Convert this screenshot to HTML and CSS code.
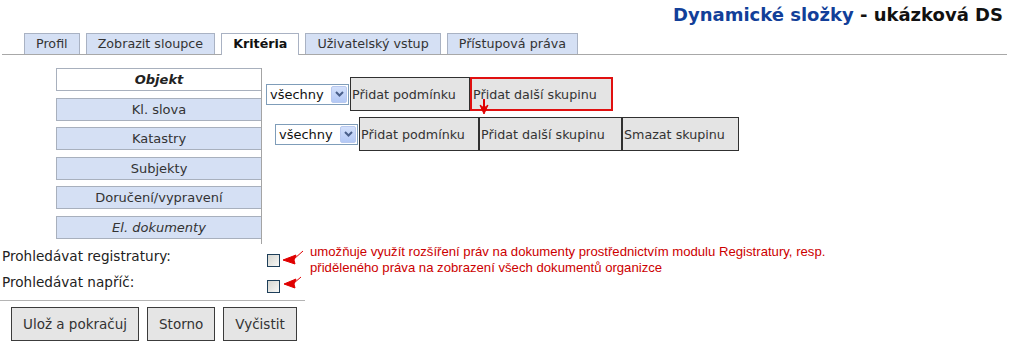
FILE: index.html
```html
<!DOCTYPE html>
<html lang="cs">
<head>
<meta charset="utf-8">
<title>Dynamické složky</title>
<link rel="stylesheet" href="styles.css">
</head>
<body>
<div class="page">
  <div class="title"><span class="brand">Dynamické složky</span> - ukázková DS</div>
  <nav class="tabs">
    <span class="tab">Profil</span>
    <span class="tab">Zobrazit sloupce</span>
    <span class="tab active">Kritéria</span>
    <span class="tab">Uživatelský vstup</span>
    <span class="tab">Přístupová práva</span>
  </nav>
  <div class="form">
    <div class="side">
      <div class="side-item active">Objekt</div>
      <div class="side-item">Kl. slova</div>
      <div class="side-item">Katastry</div>
      <div class="side-item">Subjekty</div>
      <div class="side-item">Doručení/vypravení</div>
      <div class="side-item italic">El. dokumenty</div>
    </div>
    <div class="builder">
      <div class="group">
        <div class="select">všechny<span class="sel-btn"><svg width="9" height="6" viewBox="0 0 9 6"><path d="M1 1 L4.5 4.5 L8 1" fill="none" stroke="#4a5f8a" stroke-width="2"/></svg></span></div>
        <button class="btn w-a">Přidat podmínku</button>
        <button class="btn w-b hl">Přidat další skupinu</button>
      </div>
      <div class="group sub">
        <div class="select">všechny<span class="sel-btn"><svg width="9" height="6" viewBox="0 0 9 6"><path d="M1 1 L4.5 4.5 L8 1" fill="none" stroke="#4a5f8a" stroke-width="2"/></svg></span></div>
        <button class="btn w-a">Přidat podmínku</button>
        <button class="btn w-b">Přidat další skupinu</button>
        <button class="btn w-c">Smazat skupinu</button>
      </div>
    </div>
    <label class="lbl" for="cb1">Prohledávat registratury:</label>
    <div class="cb-cell"><input class="cb" type="checkbox" id="cb1"></div>
    <label class="lbl" for="cb2">Prohledávat napříč:</label>
    <div class="cb-cell"><input class="cb" type="checkbox" id="cb2"></div>
  </div>
  <div class="rule"></div>
  <div class="actions">
    <button class="abtn">Ulož a pokračuj</button>
    <button class="abtn">Storno</button>
    <button class="abtn">Vyčistit</button>
  </div>
  <div class="note">umožňuje využít rozšíření práv na dokumenty prostřednictvím modulu Registratury, resp.<br>přiděleného práva na zobrazení všech dokumentů organizce</div>
  <svg class="marks" width="1009" height="344" viewBox="0 0 1009 344">
    <g fill="#e00000" stroke="#e00000">
      <line x1="484" y1="99" x2="484" y2="112" stroke-width="2"/>
      <path d="M480 105 L484 114 L488 105 L484 108 Z" stroke-width="1"/>
      <path d="M283 260 L296 255 L294 260 L295 264 Z" stroke-width="1"/>
      <line x1="294" y1="259" x2="303" y2="251" stroke-width="1"/>
      <path d="M284 284 L296 279 L294 284 L295 288 Z" stroke-width="1"/>
      <line x1="294" y1="283" x2="301" y2="277" stroke-width="1"/>
    </g>
  </svg>
</div>
</body>
</html>
```
FILE: styles.css
```css
* { box-sizing: border-box; }
body {
  margin: 0;
  background: #fff;
  color: #222;
  font-family: "DejaVu Sans", Verdana, sans-serif;
}
.page {
  position: relative;
  width: 1009px;
  height: 344px;
  overflow: hidden;
}
.title {
  height: 33px;
  padding: 4px 6px 0 0;
  text-align: right;
  font-size: 18px;
  font-weight: bold;
  line-height: 22px;
  color: #111;
}
.title .brand { color: #123f99; }

.tabs {
  display: flex;
  gap: 6px;
  height: 22px;
  margin: 0 2px;
  padding-left: 22px;
  border-bottom: 1px solid #a8a8a8;
}
.tab {
  height: 21px;
  padding: 0 11px;
  border: 1px solid #a9b2c3;
  border-bottom: none;
  background: #d5e0f4;
  font-size: 12.7px;
  line-height: 20px;
  color: #333;
}
.tab.active {
  height: 22px;
  background: #fff;
  font-weight: bold;
  color: #111;
}

.form {
  display: grid;
  grid-template-columns: 262px 1fr;
  margin-top: 13px;
}
.side {
  display: flex;
  flex-direction: column;
  gap: 6.6px;
  padding: 0 0 5px 56px;
  border-right: 1px solid #a4a4a4;
}
.side-item {
  height: 23px;
  border: 1px solid #a8b0bd;
  border-right: none;
  background: #d5e0f4;
  text-align: center;
  font-size: 13px;
  line-height: 21px;
  color: #333;
}
.side-item.active {
  background: #fff;
  font-weight: bold;
  font-style: italic;
  color: #222;
}
.side-item.italic { font-style: italic; }

.builder { padding: 9px 0 0 4px; }
.group {
  display: flex;
  align-items: center;
}
.group.sub { margin: 6px 0 0 9px; }
.select {
  display: flex;
  align-items: center;
  justify-content: space-between;
  width: 83px;
  height: 21px;
  margin-right: 1px;
  padding: 0 1px 0 3px;
  border: 1px solid #7f9db9;
  background: #fff;
  font-size: 13px;
  color: #111;
}
.sel-btn {
  display: flex;
  align-items: center;
  justify-content: center;
  width: 16px;
  height: 17px;
  border: 1px solid #b9c9ef;
  border-radius: 2px;
  background: linear-gradient(#d3e0fb, #b3c8f5);
}
.btn {
  height: 34px;
  padding: 0 0 0 1px;
  border: 1px solid #303030;
  background: #e4e4e4;
  font-family: "DejaVu Sans", Verdana, sans-serif;
  font-size: 12.7px;
  color: #333;
  text-align: left;
}
.w-a { width: 120px; }
.w-b { width: 143px; }
.w-c { width: 117px; }
.btn.hl { border: 2px solid #e01010; }

.lbl {
  height: 26px;
  padding: 4px 0 0 2px;
  font-size: 13.6px;
  line-height: 16px;
  color: #222;
}
.cb-cell { height: 26px; }
.cb {
  appearance: none;
  display: block;
  width: 13px;
  height: 13px;
  margin: 10px 0 0 5px;
  border: 1px solid #1e3f5a;
  background: linear-gradient(135deg, #d6d6d0, #f8f8f6);
}

.rule {
  width: 305px;
  height: 1px;
  margin-top: 4px;
  background: #b4b4b4;
}
.actions {
  display: flex;
  gap: 8px;
  padding: 6px 0 0 11px;
}
.abtn {
  height: 34px;
  padding: 0 11px;
  border: 1px solid #3c3c3c;
  background: #e5e5e5;
  font-family: "DejaVu Sans", Verdana, sans-serif;
  font-size: 13.5px;
  color: #333;
}

.note {
  position: absolute;
  left: 310px;
  top: 244px;
  font-family: "Liberation Sans", Arial, sans-serif;
  font-size: 13.15px;
  line-height: 16px;
  color: #cc0000;
  white-space: nowrap;
}
.marks {
  position: absolute;
  left: 0;
  top: 0;
  pointer-events: none;
}
```
